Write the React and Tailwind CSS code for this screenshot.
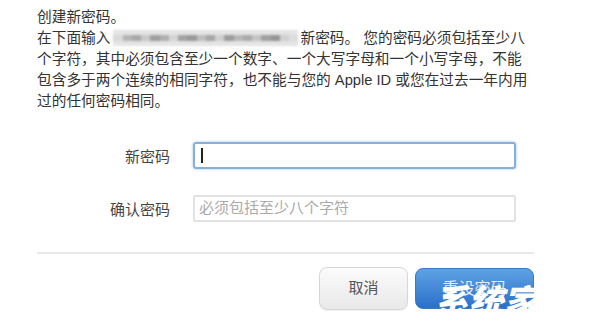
import React from "react";

const font = { fontFamily: '"Liberation Sans", "Noto Sans CJK SC", sans-serif' };

// pixelated smear hiding the e-mail address
const Smear = () => {
  const cells = [
    "#d9d9d9", "#b5b5b5", "#a8a8a8", "#c9c9c9", "#9f9f9f", "#b0b0b0", "#d4d4d4", "#a3a3a3",
    "#989898", "#bdbdbd", "#a6a6a6", "#cfcfcf", "#9c9c9c", "#b8b8b8", "#aaaaaa", "#c4c4c4",
    "#a0a0a0", "#959595", "#d0d0d0", "#dcdcdc",
  ];
  return (
    <span className="relative -top-[1px] inline-flex align-middle w-[185px] h-[16px] ml-[3px] mr-[2px] bg-[#e4e4e4] blur-[0.8px]">
      {cells.map((c, i) => (
        <span key={i} className="flex-1 flex flex-col justify-center">
          <span className="h-[6px]" style={{ backgroundColor: c }} />
        </span>
      ))}
    </span>
  );
};

export default function App() {
  return (
    <div className="w-[600px] h-[330px] bg-white overflow-hidden" style={font}>
      <div className="ml-[37px] w-[497px] pt-[7px]">
        {/* intro text */}
        <p className="text-[14.7px] leading-[21px] text-[#333] whitespace-nowrap">
          创建新密码。
          <br />
          在下面输入
          <Smear />
          新密码。 您的密码必须包括至少八
          <br />
          个字符，其中必须包含至少一个数字、一个大写字母和一个小写字母，不能
          <br />
          包含多于两个连续的相同字符，也不能与您的 Apple ID 或您在过去一年内用
          <br />
          过的任何密码相同。
        </p>

        {/* form */}
        <div className="mt-[30px] flex flex-col gap-[26px]">
          <div className="flex items-center">
            <label className="w-[133px] pt-[4px] text-right text-[15px] text-[#444]">新密码</label>
            <div className="ml-[23px] w-[323px] h-[27px] flex items-center px-[6px] rounded-[3px] border-2 border-[#86afdc] shadow-[0_0_3px_#9fc2e8]">
              <span className="w-[1.5px] h-[15px] bg-[#222]" />
            </div>
          </div>
          <div className="flex items-center">
            <label className="w-[133px] pt-[4px] text-right text-[15px] text-[#444]">确认密码</label>
            <div className="ml-[23px] w-[323px] h-[27px] flex items-center px-[4px] rounded-[2px] border-2 border-[#e2e2e2] text-[15px] text-[#aaa]">
              必须包括至少八个字符
            </div>
          </div>
        </div>

        <div className="mt-[30px] h-[2px] bg-[#e8e8e8]" />

        {/* buttons */}
        <div className="mt-[13px] flex justify-end gap-[7px]">
          <button className="w-[89px] h-[43px] rounded-[8px] border border-[#d6d6d6] bg-gradient-to-b from-[#fcfcfc] to-[#e8e8e8] text-[15px] text-[#555] shadow-[0_1px_1px_rgba(0,0,0,0.06)]">
            取消
          </button>
          <div className="relative mt-[1px]">
            <button className="w-[119px] h-[41px] rounded-[8px] border border-[#3a78c8] bg-gradient-to-b from-[#5ea2e4] to-[#2b6fca] text-[16px] text-[#e6eef9]">
              重设密码
            </button>
            <span
              className="absolute left-[18px] top-[14px] text-[35px] leading-none font-black italic text-white whitespace-nowrap pointer-events-none"
              style={{ fontFamily: '"Noto Sans CJK SC", sans-serif' }}
            >
              系统家
            </span>
          </div>
        </div>
      </div>
    </div>
  );
}
